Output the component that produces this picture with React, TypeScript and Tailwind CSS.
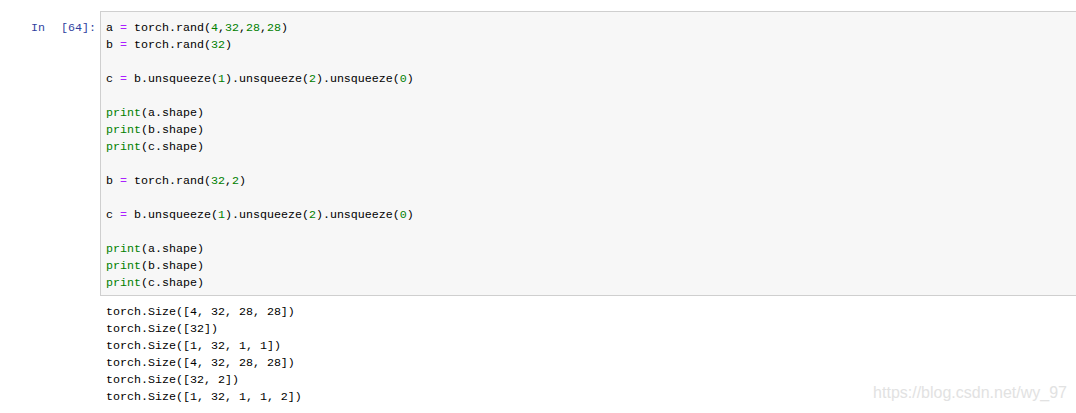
import React from 'react';

type Tok = { t: string; c?: 'op' | 'num' | 'fn' };

const mono = "font-['Liberation_Mono','DejaVu_Sans_Mono',monospace] text-[11.67px] leading-[17px]";

const op = (t: string): Tok => ({ t, c: 'op' });
const num = (t: string): Tok => ({ t, c: 'num' });
const fn = (t: string): Tok => ({ t, c: 'fn' });

const printLines = (): Tok[][] => [
  [fn('print'), { t: '(a.shape)' }],
  [fn('print'), { t: '(b.shape)' }],
  [fn('print'), { t: '(c.shape)' }],
];

const unsq: Tok[] = [
  { t: 'c ' },
  op('='),
  { t: ' b.unsqueeze(' },
  num('1'),
  { t: ').unsqueeze(' },
  num('2'),
  { t: ').unsqueeze(' },
  num('0'),
  { t: ')' },
];

const code: Tok[][] = [
  [{ t: 'a ' }, op('='), { t: ' torch.rand(' }, num('4'), { t: ',' }, num('32'), { t: ',' }, num('28'), { t: ',' }, num('28'), { t: ')' }],
  [{ t: 'b ' }, op('='), { t: ' torch.rand(' }, num('32'), { t: ')' }],
  [],
  unsq,
  [],
  ...printLines(),
  [],
  [{ t: 'b ' }, op('='), { t: ' torch.rand(' }, num('32'), { t: ',' }, num('2'), { t: ')' }],
  [],
  unsq,
  [],
  ...printLines(),
];

const output = [
  'torch.Size([4, 32, 28, 28])',
  'torch.Size([32])',
  'torch.Size([1, 32, 1, 1])',
  'torch.Size([4, 32, 28, 28])',
  'torch.Size([32, 2])',
  'torch.Size([1, 32, 1, 1, 2])',
];

const tokClass = (c?: Tok['c']) => {
  if (c === 'op') return 'text-[#aa22ff]';
  if (c === 'num') return 'text-[#008000]';
  if (c === 'fn') return 'text-[#008000]';
  return '';
};

export default function App() {
  return (
    <div className="relative w-[1076px] h-[413px] overflow-hidden bg-white">
      {/* Input cell */}
      <div className="flex pt-[11px]">
        <div className={`w-[100px] shrink-0 pt-[9px] flex text-[#303f9f] ${mono}`}>
          <span className="ml-[31px]">In</span>
          <span className="ml-[16px]">[64]:</span>
        </div>
        <div className="flex-1 -mr-[4px] bg-[#f7f7f7] border border-[#cfcfcf] pl-[5px] pt-[8px] pb-[3px]">
          <pre className={`${mono} text-black`}>
            {code.map((line, i) => (
              <div key={i} className="h-[17px] whitespace-pre">
                {line.map((tok, j) => (
                  <span key={j} className={tokClass(tok.c)}>
                    {tok.t}
                  </span>
                ))}
              </div>
            ))}
          </pre>
        </div>
      </div>

      {/* Output */}
      <div className="pl-[106px] pt-[8px]">
        <pre className={`${mono} text-black`}>
          {output.map((l, i) => (
            <div key={i} className="h-[17px] whitespace-pre">
              {l}
            </div>
          ))}
        </pre>
      </div>

      {/* Watermark */}
      <div className="absolute right-[9px] bottom-[8px] font-['Liberation_Sans',Arial,sans-serif] text-[16px] text-[#e2e2e2]">
        https://blog.csdn.net/wy_97
      </div>
    </div>
  );
}
